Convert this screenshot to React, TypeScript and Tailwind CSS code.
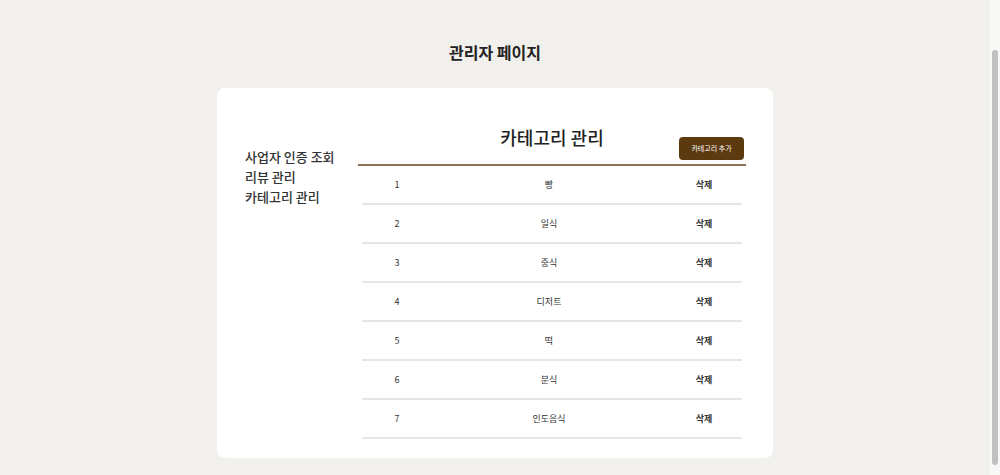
import React from "react";

const categories = ["빵", "일식", "중식", "디저트", "떡", "분식", "인도음식"];

const menus = ["사업자 인증 조회", "리뷰 관리", "카테고리 관리"];

export default function App() {
  return (
    <div
      className="flex h-[475px] w-full overflow-hidden bg-[#f1f0ec] text-[#222]"
      style={{ fontFamily: '"Noto Sans CJK KR", "Noto Sans", sans-serif' }}
    >
      <div className="flex-1 pt-[40px]">
        <h1 className="text-center text-[16px] font-semibold leading-[24px]">관리자 페이지</h1>

        <div className="mx-auto mt-[24px] flex h-[370px] w-[556px] rounded-lg bg-white">
          {/* sidebar */}
          <ul className="w-[141px] pl-[28px] pt-[59px] text-[13px] font-medium leading-[20px] text-[#333]">
            {menus.map((m) => (
              <li key={m}>{m}</li>
            ))}
          </ul>

          {/* main */}
          <div className="w-[388px]">
            <div className="grid h-[78px] grid-cols-[1fr_auto_1fr] border-b-2 border-[#8d7056] pt-[35px] pb-[4px]">
              <div />
              <h2 className="self-start text-[18px] font-medium leading-[28px]">카테고리 관리</h2>
              <div className="flex items-end justify-end pr-[2px]">
                <button className="h-[23px] w-[65px] rounded-[4px] bg-[#5b3a10] text-[7px] text-white">
                  카테고리 추가
                </button>
              </div>
            </div>

            <div className="px-[4px]">
              {categories.map((c, i) => (
                <div
                  key={c}
                  className="grid h-[39px] grid-cols-[70px_1fr_76px] items-center border-b-2 border-[#e6e6e6] text-[9px] text-[#333]"
                >
                  <span className="text-center">{i + 1}</span>
                  <span className="text-center">{c}</span>
                  <span className="text-center font-bold">삭제</span>
                </div>
              ))}
            </div>
          </div>
        </div>
      </div>

      {/* scrollbar */}
      <div className="w-[10px] bg-[#f8f8f6] pt-[50px] pb-[10px] pl-[2px] pr-[2px]">
        <div className="h-full rounded-full bg-[#c1c1c1]" />
      </div>
    </div>
  );
}
